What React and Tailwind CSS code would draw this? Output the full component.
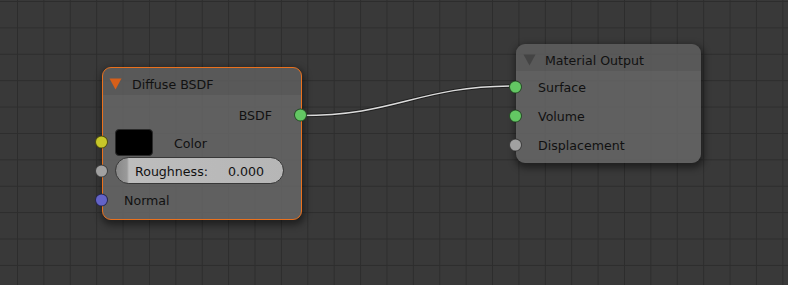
import React from 'react';

const FONT = "font-['DejaVu_Sans',sans-serif]";
const LABEL = 'mt-[4px] text-[12.6px] text-[#111]';

const Socket = ({ color, side }) => (
  <span
    className={`absolute top-1/2 -translate-y-1/2 w-[13px] h-[13px] rounded-full border border-black/60 ${color} ${side}`}
  />
);

const Triangle = ({ color }) => (
  <svg width="13" height="12" viewBox="0 0 13 12" className="shrink-0">
    <polygon points="0.5,0.5 12.5,0.5 6.5,11.5" fill={color} />
  </svg>
);

const DiffuseNode = () => (
  <div className="absolute left-[102px] top-[67px] w-[200px] h-[153px] rounded-[9px] border-[1.5px] border-[#ea711d] bg-[rgba(102,102,102,0.86)] shadow-[1px_3px_7px_2px_rgba(0,0,0,0.45)]">
    {/* header */}
    <div className="h-[27px] flex items-center gap-[10px] pl-[6px] pt-[5px] bg-[rgba(0,0,0,0.07)] rounded-t-[8px]">
      <Triangle color="#d65f1a" />
      <span className="mt-[2px] text-[12.6px] text-[#111]">Diffuse BSDF</span>
    </div>

    <div className="pt-[6px]">
      <div className="relative h-[27px] flex items-center justify-end pr-[29px]">
        <span className={LABEL}>BSDF</span>
        <Socket color="bg-[#63c763]" side="right-[-5.5px]" />
      </div>

      <div className="relative h-[28px] flex items-center pl-[12px]">
        <div className="w-[38px] h-[27px] rounded-[4px] bg-black border border-[#2a2a2a]" />
        <span className={`ml-[21px] ${LABEL}`}>Color</span>
        <Socket color="bg-[#c7c729]" side="left-[-8.5px]" />
      </div>

      <div className="relative h-[29px] flex items-center pl-[12px]">
        <div className="w-[169px] h-[27px] rounded-full border border-[#383838] bg-[linear-gradient(to_right,#888888_0px,#9a9a9a_11px,#bdbdbd_13px,#b6b6b6_100%)] flex items-center justify-between px-[19px]">
          <span className={LABEL}>Roughness:</span>
          <span className={LABEL}>0.000</span>
        </div>
        <Socket color="bg-[#a1a1a1]" side="left-[-8.5px]" />
      </div>

      <div className="relative h-[29px] flex items-center pl-[21px]">
        <span className={LABEL}>Normal</span>
        <Socket color="bg-[#6363c7]" side="left-[-8.5px]" />
      </div>
    </div>
  </div>
);

const MaterialOutputNode = () => (
  <div className="absolute left-[516px] top-[44px] w-[185px] h-[119px] rounded-[9px] bg-[rgba(102,102,102,0.86)] shadow-[1px_3px_7px_2px_rgba(0,0,0,0.45)]">
    <div className="h-[27px] flex items-center gap-[9px] pl-[7px] pt-[5px] bg-[rgba(0,0,0,0.07)] rounded-t-[9px]">
      <Triangle color="#444444" />
      <span className="mt-[2px] text-[12.6px] text-[#111]">Material Output</span>
    </div>
    <div className="pt-[1px]">
      {['Surface', 'Volume', 'Displacement'].map((label, i) => (
        <div key={label} className="relative h-[29px] flex items-center pl-[22px]">
          <span className={LABEL}>{label}</span>
          <Socket color={i < 2 ? 'bg-[#63c763]' : 'bg-[#a1a1a1]'} side="left-[-7px]" />
        </div>
      ))}
    </div>
  </div>
);

const App = () => (
  <div
    className={`relative w-[788px] h-[285px] overflow-hidden bg-[#393939] bg-[linear-gradient(to_right,#2d2d2d_1px,transparent_1px),linear-gradient(to_bottom,#2d2d2d_1px,transparent_1px)] bg-[size:26.4px_26.4px] bg-[position:17px_1px] ${FONT}`}
  >
    <svg className="absolute inset-0 pointer-events-none" width="788" height="285">
      <path d="M300 115.5 C 400 115.5, 415 86, 515.5 86" fill="none" stroke="#1c1c1c" strokeOpacity="0.85" strokeWidth="3.5" />
      <path d="M300 115.5 C 400 115.5, 415 86, 515.5 86" fill="none" stroke="#dcdcdc" strokeWidth="1.5" />
    </svg>
    <DiffuseNode />
    <MaterialOutputNode />
  </div>
);

export default App;
